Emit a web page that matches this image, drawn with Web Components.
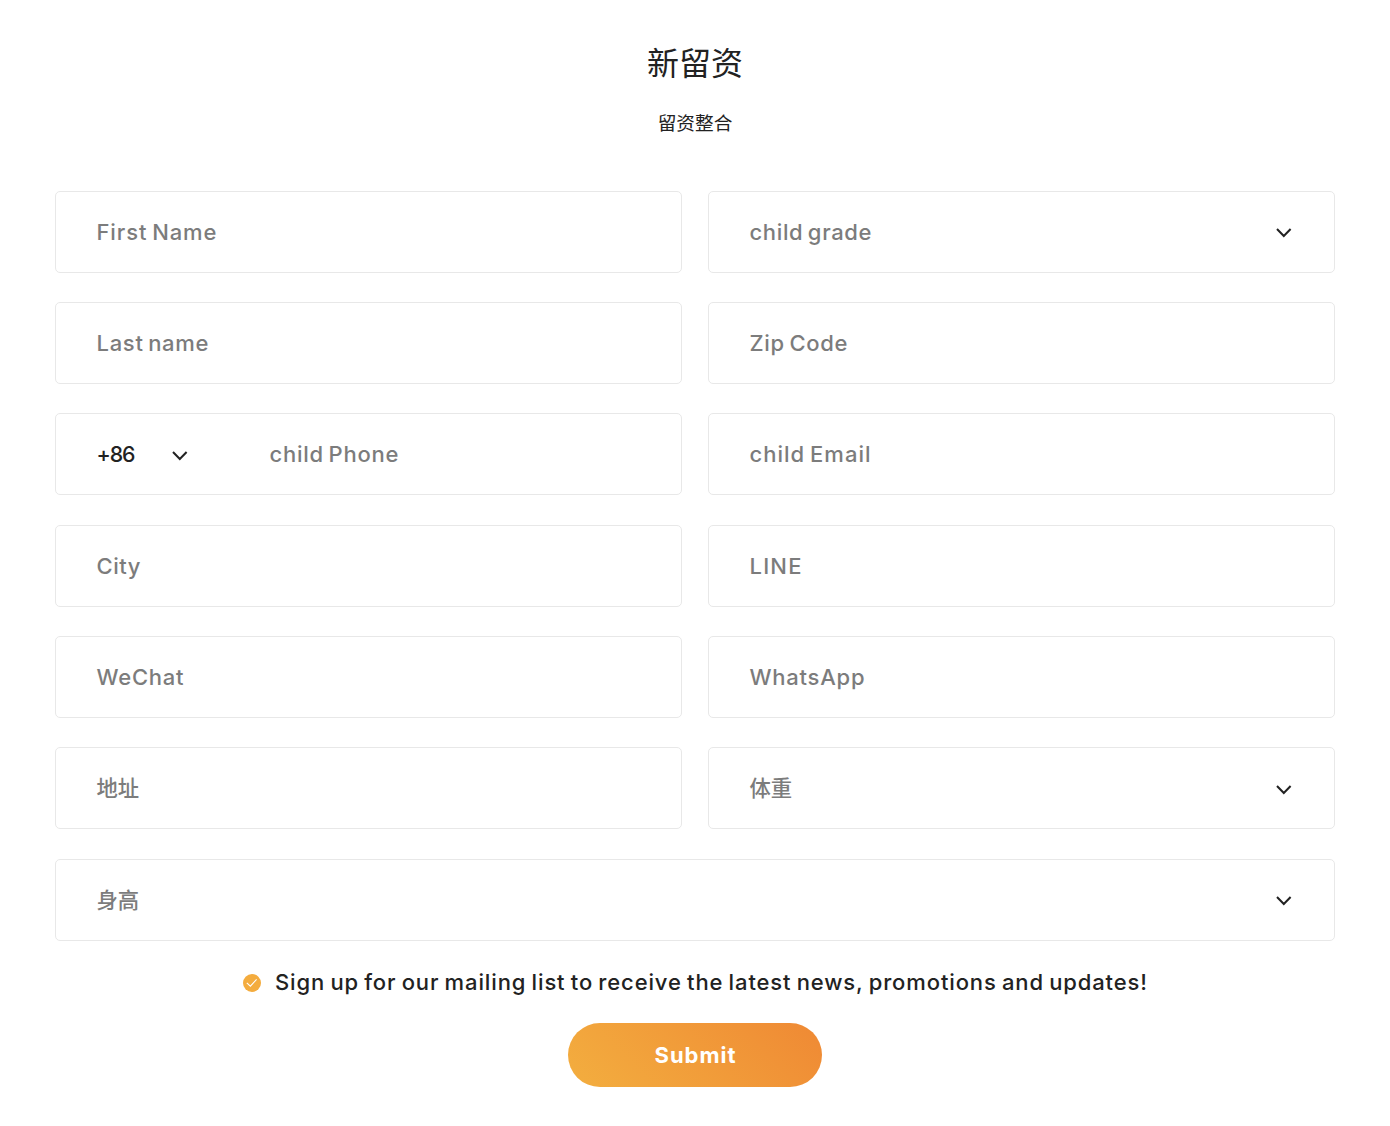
<!DOCTYPE html>
<html lang="zh">
<head>
<meta charset="utf-8">
<title>新留资</title>
<style>
body { margin: 0; background: #fff; color: #222; font-family: Inter, "Noto Sans CJK SC", sans-serif; }
</style>
</head>
<body>
<lead-form heading="新留资" subheading="留资整合">
  <form-field><fit-text w="120">First Name</fit-text></form-field>
  <form-field select><fit-text w="122">child grade</fit-text></form-field>
  <form-field><fit-text w="112">Last name</fit-text></form-field>
  <form-field><fit-text w="98">Zip Code</fit-text></form-field>
  <form-field><phone-code slot="prefix"><fit-text w="39">+86</fit-text></phone-code><fit-text w="129">child Phone</fit-text></form-field>
  <form-field><fit-text w="121">child Email</fit-text></form-field>
  <form-field><fit-text w="44">City</fit-text></form-field>
  <form-field><fit-text w="52">LINE</fit-text></form-field>
  <form-field><fit-text w="87">WeChat</fit-text></form-field>
  <form-field><fit-text w="115">WhatsApp</fit-text></form-field>
  <form-field cjk><fit-text w="42.6">地址</fit-text></form-field>
  <form-field cjk select><fit-text w="42.6">体重</fit-text></form-field>
  <form-field cjk select wide><fit-text w="42.6">身高</fit-text></form-field>
  <consent-check slot="footer"><fit-text w="872">Sign up for our mailing list to receive the latest news, promotions and updates!</fit-text></consent-check>
  <submit-button slot="footer"><fit-text w="81">Submit</fit-text></submit-button>
</lead-form>
<script>
const base = (tag, html, init) => customElements.define(tag, class extends HTMLElement {
  connectedCallback() {
    if (this.shadowRoot) return;
    this.attachShadow({ mode: "open" }).innerHTML = html;
    if (init) init(this);
  }
});

base("chevron-icon", `<style>
:host { display: block; width: 16px; height: 10px; }
svg { display: block; }
</style><svg width="16" height="10" viewBox="0 0 16 10" fill="none" stroke="#222" stroke-width="2"><path d="M1 1l6.8 7L14.6 1"/></svg>`);

base("form-field", `<style>
:host { display: flex; align-items: center; box-sizing: border-box; height: 82px; padding: 0 42px 0 40.5px;
  border: 1px solid #e8e8e8; border-radius: 5px; color: #7c7c7c; font-size: 22px; line-height: 30px; font-weight: 500; word-spacing: -2px; }
:host([cjk]) { font-size: 21.33px; }
:host([wide]) { grid-column: 1 / -1; }
:host(:not([select])) chevron-icon { display: none; }
.label { flex: 1; }
chevron-icon { margin-top: 3px; }
</style><slot name="prefix"></slot><div class="label"><slot></slot></div><chevron-icon></chevron-icon>`);

base("phone-code", `<style>
:host { display: flex; align-items: center; width: 173px; color: #222; font-size: 21.33px; }
.code { width: 75.5px; }
chevron-icon { margin-top: 3px; }
</style><div class="code"><slot></slot></div><chevron-icon></chevron-icon>`);

base("consent-check", `<style>
:host { display: flex; justify-content: center; align-items: center; gap: 14px; height: 30px; font-size: 22px; line-height: 30px; font-weight: 500; word-spacing: -1.5px; }
svg { display: block; margin-top: 2px; }
</style><svg width="18" height="18" viewBox="0 0 18 18"><circle cx="9" cy="9" r="9" fill="#f4ac3e"/><path d="M3.8 8.8l3.6 3.3L13.6 5.4" fill="none" stroke="#fff" stroke-width="1.1"/></svg><slot></slot>`);

base("submit-button", `<style>
:host { display: block; width: 254px; margin: 26px auto 0; }
button { display: flex; align-items: center; justify-content: center; width: 100%; height: 64px; padding: 0; border: 0; border-radius: 32px;
  background: linear-gradient(45deg, #f3ae3f, #ef8934); color: #fff; font: 700 22px/30px Inter, sans-serif; }
</style><button type="button"><slot></slot></button>`);

base("lead-form", `<style>
:host { display: block; padding: 40px 55px; }
h1 { margin: 0; height: 48px; font-size: 32px; line-height: 48px; font-weight: 400; text-align: center; }
p { margin: 22px 0 0; height: 28px; font-size: 18.67px; line-height: 28px; text-align: center; }
.fields { display: grid; grid-template-columns: 1fr 1fr; column-gap: 26px; row-gap: 29.33px; margin-top: 52.8px; }
.footer { margin-top: 26.2px; }
</style><h1></h1><p></p><div class="fields"><slot></slot></div><div class="footer"><slot name="footer"></slot></div>`, el => {
  el.shadowRoot.querySelector("h1").textContent = el.getAttribute("heading");
  el.shadowRoot.querySelector("p").textContent = el.getAttribute("subheading");
});

// Spreads its label over the width given in w by adjusting the tracking.
base("fit-text", `<style>
:host { display: inline-block; white-space: nowrap; }
</style><slot></slot>`, el => {
  const w = +el.getAttribute("w"), n = el.textContent.length;
  const gap = (w - el.getBoundingClientRect().width) / (n - 1);
  el.style.letterSpacing = gap + "px";
  el.style.marginRight = -gap + "px";
});
</script>
</body>
</html>
